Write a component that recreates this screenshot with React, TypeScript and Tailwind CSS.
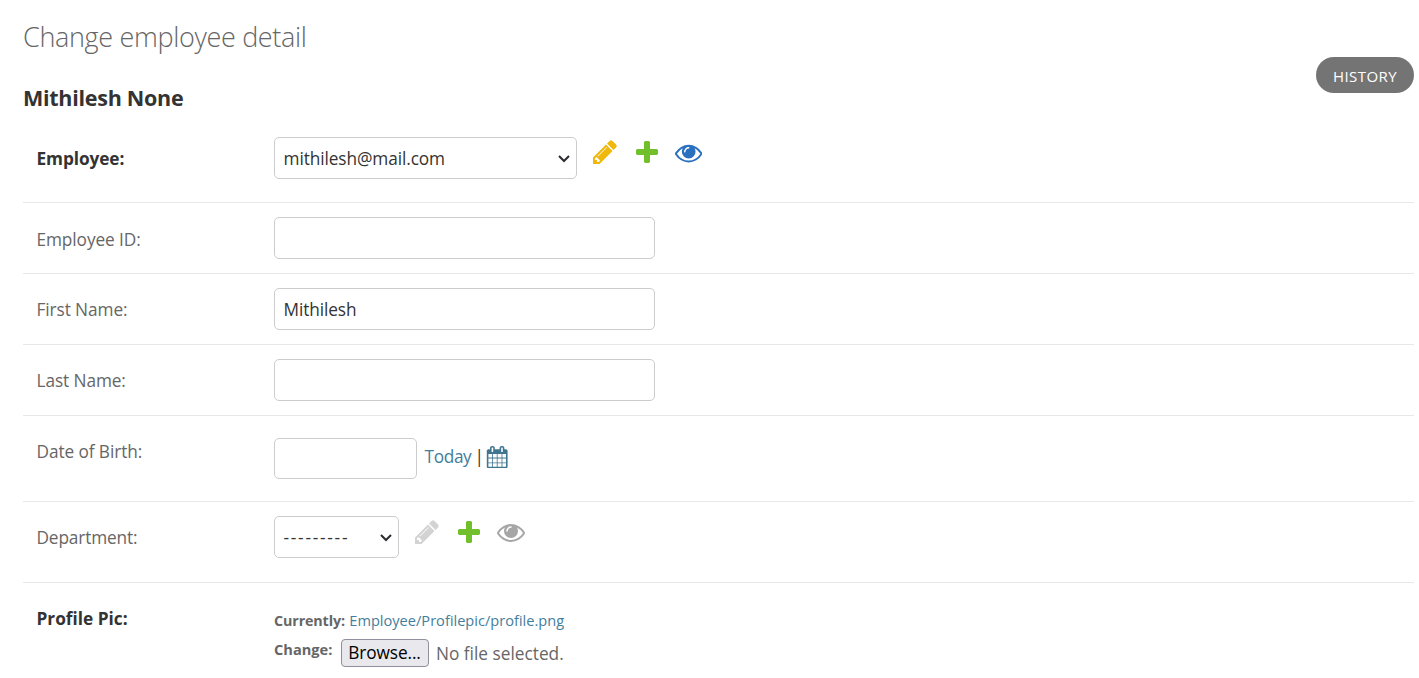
import type { ReactNode } from 'react';

const PENCIL =
  'M491 1536l91-91-235-235-91 91v107h128v128h107zm523-928q0-22-22-22-10 0-17 7l-542 542q-7 7-7 17 0 22 22 22 10 0 17-7l542-542q7-7 7-17zm-54-192l416 416-832 832h-416v-416zm683 96q0 53-37 90l-166 166-416-416 166-165q36-38 90-38 53 0 91 38l235 234q37 39 37 91z';
const PLUS =
  'M1600 796v192q0 40-28 68t-68 28h-416v416q0 40-28 68t-68 28h-192q-40 0-68-28t-28-68v-416h-416q-40 0-68-28t-28-68v-192q0-40 28-68t68-28h416v-416q0-40 28-68t68-28h192q40 0 68 28t28 68v416h416q40 0 68 28t28 68z';
const EYE =
  'M1664 960q-152-236-381-353 61 104 61 225 0 185-131.5 316.5t-316.5 131.5-316.5-131.5-131.5-316.5q0-121 61-225-229 117-381 353 133 205 333.5 326.5t434.5 121.5 434.5-121.5 333.5-326.5zm-720-384q0-20-14-34t-34-14q-125 0-214.5 89.5t-89.5 214.5q0 20 14 34t34 14 34-14 14-34q0-86 61-147t147-61q20 0 34-14t14-34zm848 384q0 34-20 69-140 230-376.5 368.5t-499.5 138.5-499.5-139-376.5-368q-20-35-20-69t20-69q140-229 376.5-368t499.5-139 499.5 139 376.5 368q20 35 20 69z';
const CALENDAR =
  'M192 1664h288v-288h-288v288zm352 0h320v-288h-320v288zm-352-352h288v-320h-288v320zm352 0h320v-320h-320v320zm-352-384h288v-288h-288v288zm736 736h320v-288h-320v288zm-384-736h320v-288h-320v288zm768 736h288v-288h-288v288zm-384-352h320v-320h-320v320zm-352-864v-288q0-13-9.5-22.5t-22.5-9.5h-64q-13 0-22.5 9.5t-9.5 22.5v288q0 13 9.5 22.5t22.5 9.5h64q13 0 22.5-9.5t9.5-22.5zm736 864h288v-320h-288v320zm-384-384h320v-288h-320v288zm384 0h288v-288h-288v288zm32-480v-288q0-13-9.5-22.5t-22.5-9.5h-64q-13 0-22.5 9.5t-9.5 22.5v288q0 13 9.5 22.5t22.5 9.5h64q13 0 22.5-9.5t9.5-22.5zm384-64v1280q0 52-38 90t-90 38h-1408q-52 0-90-38t-38-90v-1280q0-52 38-90t90-38h128v-96q0-66 47-113t113-47h64q66 0 113 47t47 113v96h384v-96q0-66 47-113t113-47h64q66 0 113 47t47 113v96h128q52 0 90 38t38 90z';

function Icon({ d, className }: { d: string; className: string }) {
  return (
    <svg viewBox="0 0 1792 1792" fill="currentColor" className={`shrink-0 ${className}`}>
      <path d={d} />
    </svg>
  );
}

function Row({ label, bold, className, labelClass, children }: {
  label: string; bold?: boolean; className: string; labelClass: string; children: ReactNode;
}) {
  return (
    <div className={`flex items-start border-b border-[#e8e8e8] ${className}`}>
      <div className={`w-[251px] shrink-0 pl-[13.5px] ${bold ? 'font-bold text-[#333]' : 'text-[#666]'} ${labelClass}`}>
        {label}
      </div>
      {children}
    </div>
  );
}

const field = 'rounded-[5px] border border-[#ccc] bg-white px-[8.5px] text-[#333] outline-none';

function Select({ value, className }: { value: string; className: string }) {
  return (
    <div className={`relative ${className}`}>
      <select className={`${field} h-[42px] w-full appearance-none pt-[2px]`}>
        <option>{value}</option>
      </select>
      <svg viewBox="0 0 12 8" className="pointer-events-none absolute top-[17.5px] right-[7.5px] h-2 w-3" fill="none" stroke="#2b2b30" strokeWidth="2">
        <path d="M1 1l5 5 5-5" />
      </svg>
    </div>
  );
}

function RelatedLinks({ disabled }: { disabled?: boolean }) {
  return (
    <div className={`ml-[14px] flex gap-[14px] ${disabled ? 'mt-[2px]' : 'mt-[1.4px]'}`}>
      <Icon d={PENCIL} className={`size-7 ${disabled ? 'text-[#d3d3d3]' : 'text-[#efb80b]'}`} />
      <Icon d={PLUS} className="size-7 text-[#70bf2b]" />
      <Icon d={EYE} className={disabled ? 'size-7 text-[#a6a6a6]' : 'mt-[0.6px] size-[27.4px] text-[#2b70bf]'} />
    </div>
  );
}

export default function App() {
  return (
    <div className="h-[678px] overflow-hidden bg-white pr-[5px] pl-[23px] font-['Open_Sans',sans-serif] text-[17.25px] leading-6 tracking-[-0.09px] text-[#333]">
      <header className="flex h-[123px] items-start justify-between">
        <div>
          <h1 className="mt-[19px] text-[27px] leading-9 font-light tracking-[-0.34px] text-[#666]">Change employee detail</h1>
          <h2 className="mt-[28px] text-[21.5px] leading-[30px] font-bold tracking-[-0.27px]">Mithilesh None</h2>
        </div>
        <button className="mt-[57px] h-9 w-[98px] rounded-full bg-[#747474] pt-[2px] text-[15px] tracking-[0.45px] text-white">HISTORY</button>
      </header>

      <Row label="Employee:" bold className="h-20 pt-[14px]" labelClass="mt-[10px]">
        <Select value="mithilesh@mail.com" className="w-[303px]" />
        <RelatedLinks />
      </Row>
      <Row label="Employee ID:" className="h-[71px] pt-[14px]" labelClass="mt-[11px]">
        <input className={`${field} h-[42px] w-[381px]`} />
      </Row>
      <Row label="First Name:" className="h-[71px] pt-[14px]" labelClass="mt-[10px]">
        <input className={`${field} h-[42px] w-[381px]`} defaultValue="Mithilesh" />
      </Row>
      <Row label="Last Name:" className="h-[71px] pt-[14px]" labelClass="mt-[10px]">
        <input className={`${field} h-[42px] w-[381px]`} />
      </Row>
      <Row label="Date of Birth:" className="h-[86px] pt-[22px]" labelClass="mt-[2px]">
        <input className={`${field} h-[41px] w-[143px]`} />
        <div className="mt-[7px] ml-[7.5px] flex items-start">
          <a className="w-[50px] tracking-[-0.35px] text-[#447e9b]">Today</a>
          <span className="w-[11px]">|</span>
          <Icon d={CALENDAR} className="mt-px size-[22.4px] text-[#417690]" />
        </div>
      </Row>
      <Row label="Department:" className="h-[81px] pt-[14px]" labelClass="mt-[10px] tracking-[-0.15px]">
        <Select value="---------" className="w-[125px] tracking-[1.75px]" />
        <RelatedLinks disabled />
      </Row>
      <div className="flex items-start">
        <div className="mt-[24px] w-[251px] shrink-0 pl-[13.5px] font-bold tracking-normal">Profile Pic:</div>
        <div className="mt-[25px] text-[#666]">
          <p className="flex text-[14.6px] tracking-normal">
            <span className="w-[75.3px] pt-px text-[14.3px] font-bold tracking-[-0.12px]">Currently:</span>
            <a className="text-[#447e9b]">Employee/Profilepic/profile.png</a>
          </p>
          <div className="mt-[4px] flex items-start">
            <span className="w-[67px] text-[14.6px] font-bold tracking-normal">Change:</span>
            <button className="mt-[2px] h-7 w-[88px] rounded-[4px] border border-[#8f8f9d] bg-[#e9e9ed] pr-px leading-[26px] text-black">Browse...</button>
            <span className="mt-[5px] ml-[7px] tracking-normal">No file selected.</span>
          </div>
        </div>
      </div>
    </div>
  );
}
